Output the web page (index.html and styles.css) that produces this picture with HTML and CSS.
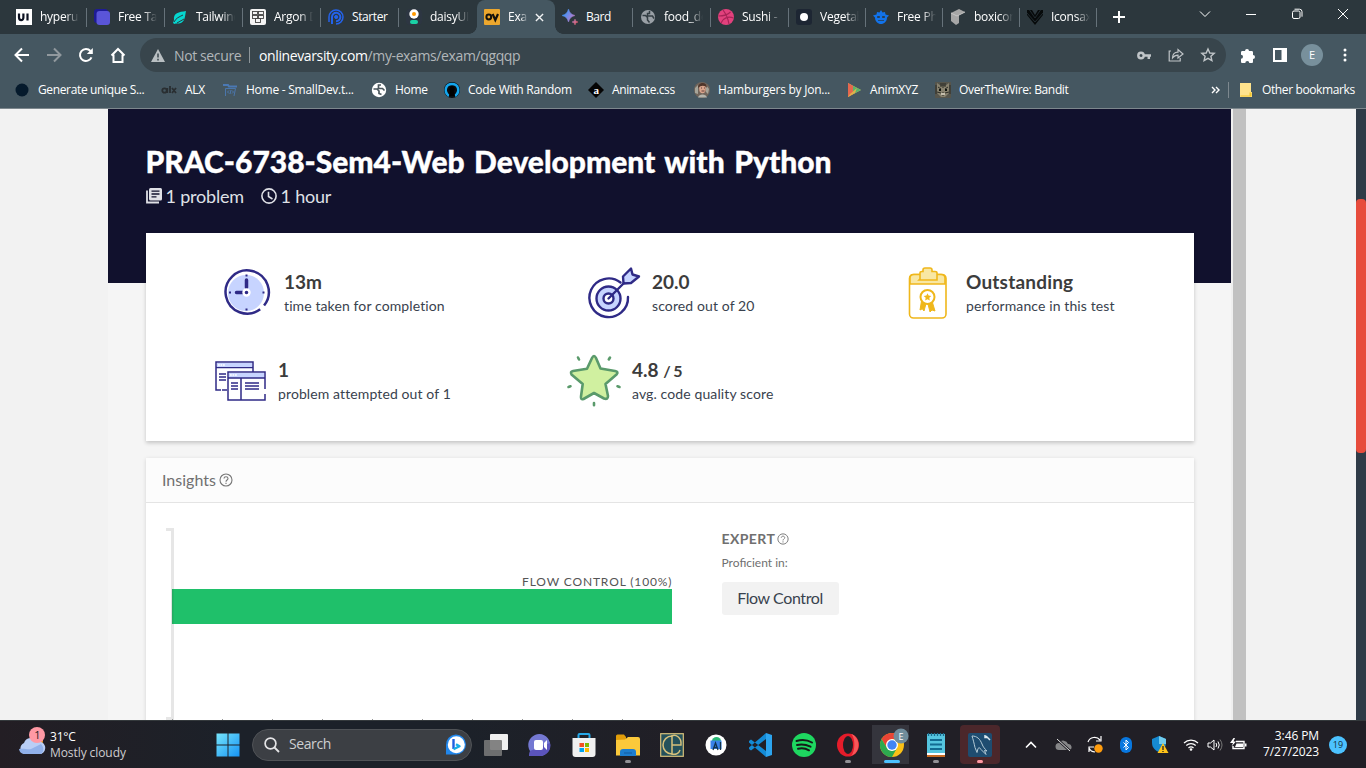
FILE: index.html
```html
<!DOCTYPE html>
<html lang="en">
<head>
<meta charset="utf-8">
<title>Exam result</title>
<link rel="stylesheet" href="styles.css">
</head>
<body>
<header class="browser">
  <div class="tabs">
    <div class="tab"><svg class="fav" viewBox="0 0 16 16"><rect width="16" height="16" fill="#fff"/><path d="M3 4.500v4c0 3.400 4.400 3.400 4.400 0v-4M11.500 4.500v7" fill="none" stroke="#0c1222" stroke-width="2.200"/></svg><span class="tt">hyperui</span></div>
    <div class="tab"><svg class="fav" viewBox="0 0 16 16"><rect width="14" height="14" rx="3" fill="#1e1b96"/><rect x="2.500" y="2" width="13.500" height="14" rx="3" fill="#5a55d8"/></svg><span class="tt">Free Tail</span></div>
    <div class="tab"><svg class="fav" viewBox="0 0 16 16"><path d="M14 2C7 3 1 4 2 11l-1 3 1.500 1C4 14 6 15 9 14c4-2 4-7 5-12z" fill="#06d6d0"/><path d="M2 13c2-4 5-5 9-7M5 14l7-4" stroke="#2c3a40" fill="none"/></svg><span class="tt">Tailwind</span></div>
    <div class="tab"><svg class="fav" viewBox="0 0 16 16"><rect width="16" height="16" rx="2" fill="#f4f4f4"/><g fill="none" stroke="#444" stroke-width=".9"><rect x="2.500" y="2.500" width="5" height="3"/><rect x="8.500" y="2.500" width="5" height="3"/><rect x="2.500" y="6.500" width="5" height="3"/><rect x="8.500" y="6.500" width="5" height="3"/><rect x="5.500" y="9.500" width="5" height="4"/></g></svg><span class="tt">Argon D</span></div>
    <div class="tab"><svg class="fav" viewBox="0 0 16 16" fill="none" stroke="#2463eb"><path d="M1 13V8a7 7 0 1 1 7 7" stroke-width="1.500"/><path d="M4 15V8a4.200 4.200 0 1 1 4 4.200" stroke-width="2"/><circle cx="8.200" cy="8" r="1.600" fill="#2463eb"/></svg><span class="tt nofade">Starter</span></div>
    <div class="tab last"><svg class="fav" viewBox="0 0 16 16"><rect width="16" height="16" rx="4" fill="#2d3642"/><circle cx="8" cy="5" r="4.700" fill="#fff"/><circle cx="8" cy="5" r="2" fill="#ff9900"/><rect x="4" y="11" width="8" height="4" rx="2" fill="#1ad1a5"/></svg><span class="tt">daisyUI</span></div>
    <div class="tab active"><svg class="fav" viewBox="0 0 16 16"><rect width="16" height="16" rx="1" fill="#eda72d"/><circle cx="4.800" cy="8" r="2.400" fill="none" stroke="#15120c" stroke-width="2"/><path d="M8.600 5l2.700 6 2.700-6" fill="none" stroke="#15120c" stroke-width="2.200"/></svg><span class="tt">Exa</span><svg class="close" viewBox="0 0 10 10"><path d="M1 1l8 8M9 1L1 9" stroke="#f1f3f4" stroke-width="1.500"/></svg></div>
    <div class="tab"><svg class="fav" viewBox="0 0 16 16"><defs><linearGradient id="bard" gradientUnits="userSpaceOnUse" x1="1" y1="6" x2="15" y2="14"><stop stop-color="#3f93f5"/><stop offset=".5" stop-color="#9a82d8"/><stop offset="1" stop-color="#e0606e"/></linearGradient></defs><path d="M6.500 0c1.300 4 2.500 5.200 6.500 6.500-4 1.300-5.200 2.500-6.500 6.500C5.200 9 4 7.800 0 6.500 4 5.200 5.200 4 6.500 0zM13 10c.6 2 1 2.400 3 3-2 .6-2.400 1-3 3-.6-2-1-2.400-3-3 2-.6 2.400-1 3-3z" fill="url(#bard)" stroke="url(#bard)" stroke-width=".5"/></svg><span class="tt nofade">Bard</span></div>
    <div class="tab"><svg class="fav" viewBox="0 0 16 16"><circle cx="8" cy="8" r="7" fill="#9aa0a6"/><path d="M2.500 6.500h3l2 2v2.500l2 2.500M9.500 2v2.500H7.500V7h5l1.500 2.500" fill="none" stroke="#333d43" stroke-width="1.500"/></svg><span class="tt">food_de</span></div>
    <div class="tab"><svg class="fav" viewBox="0 0 16 16"><circle cx="8" cy="8" r="8" fill="#e2417d"/><path d="M5 1c3 4 5 8 6 14M.5 7c6 0 9-1 12-4M3 14c2-5 7-7 12.500-5" fill="none" stroke="#a82357" stroke-width="1.200"/></svg><span class="tt">Sushi - F</span></div>
    <div class="tab narrow"><svg class="fav" viewBox="0 0 16 16"><rect width="16" height="16" rx="3" fill="#1d2633"/><circle cx="8" cy="8" r="4" fill="#fff"/></svg><span class="tt">Vegetab</span></div>
    <div class="tab narrow"><svg class="fav" viewBox="0 0 16 16"><path d="M8 1l1.500 2.500L12 3l.5 2.500 3.500 1-2 2c0 4-3 6.500-6 6.500s-6-2.500-6-6.500l-2-2 3.500-1L4 3l2.500.5z" fill="#1273eb"/><path d="M4.500 7.500h2v1h-2zM9.500 7.500h2v1h-2zM5 11.500h6" fill="#2c373d" stroke="#2c373d" stroke-width=".7"/></svg><span class="tt">Free Pho</span></div>
    <div class="tab narrow"><svg class="fav" viewBox="0 0 16 16"><path d="M1 4l8-4 6 3-6 3v8l-3 2-5-4z" fill="#a6a6a6"/><path d="M1 4l6 3 8-4" stroke="#c5c5c5" fill="none"/></svg><span class="tt">boxicons</span></div>
    <div class="tab narrow"><svg class="fav" viewBox="0 0 16 16"><path d="M0 1h5l3 5 3-5h5v5L8 16 0 6z" fill="#070a0b"/><path d="M0 4l8 9 8-9M2.500 1L8 9l5.500-8" stroke="#27343a" stroke-width=".8" fill="none"/></svg><span class="tt">Iconsax</span></div>
    <svg class="plus" viewBox="0 0 12 12"><path d="M6 0v12M0 6h12" stroke="#fff" stroke-width="2"/></svg>
    <div class="winctl">
      <svg width="12" height="12" viewBox="0 0 12 12"><path d="M1 3.500l5 5 5-5"/></svg>
      <svg width="12" height="12" viewBox="0 0 12 12"><path d="M1 6.500h10"/></svg>
      <svg width="12" height="12" viewBox="0 0 12 12"><rect x="1.500" y="3" width="7.500" height="7.500" rx="1.500"/><path d="M3.500 1.200h5a2.500 2.500 0 0 1 2.500 2.500v5"/></svg>
      <svg width="12" height="12" viewBox="0 0 12 12"><path d="M1 1l10 10M11 1L1 11"/></svg>
    </div>
  </div>
  <div class="toolbar">
    <svg class="nav" viewBox="0 0 16 16"><path d="M15 8H2M8 1.500L1.500 8 8 14.500"/></svg>
    <svg class="nav dim" viewBox="0 0 16 16"><path d="M1 8h13M8 1.500L14.500 8 8 14.500"/></svg>
    <svg class="nav" viewBox="0 0 16 16"><path d="M13.500 10.300A6 6 0 1 1 12.500 4"/><path d="M14.800 1v6H8.800z" fill="#fff" stroke="none"/></svg>
    <svg class="nav" viewBox="0 0 16 16"><path d="M1.500 8.500L8 2l6.500 6.500M3.500 7.500V15h9V7.500"/></svg>
    <div class="omni">
      <svg class="warn" viewBox="0 0 14 13"><path d="M7 0l7 13H0z" fill="#b9bfc2"/><path d="M7 4.500v4M7 9.800v1.700" stroke="#38454c" stroke-width="1.500"/></svg>
      <span class="ns">Not secure</span><i class="bar"></i>
      <span class="url"><b>onlinevarsity.com</b>/my-exams/exam/qgqqp</span>
      <svg class="key" viewBox="0 0 14 9"><circle cx="4" cy="4.500" r="2.700" fill="none" stroke="#c0c5c8" stroke-width="2.400"/><path d="M7 4.500h7M11.800 4v4" stroke="#c0c5c8" stroke-width="2.500"/></svg>
      <svg class="share" viewBox="0 0 16 14"><path d="M3 3H1.200v10h11v-3M4.500 10c0-4 2-5.800 5.500-5.800V1.500L15 6l-5 4V7.200c-2.500 0-4 .8-5.500 2.800z"/></svg>
      <svg class="star" viewBox="0 0 14 14"><path d="M7 1l1.800 4 4.400.4-3.300 2.900 1 4.300L7 10.300l-3.900 2.300 1-4.300L.8 5.400 5.200 5z"/></svg>
    </div>
    <svg class="ext" viewBox="0 0 15 15"><path d="M1 4.500c0-1 .5-1.500 1.500-1.500H5a2 2 0 0 1 4 0h2.500c1 0 1.500.5 1.500 1.500V7a2 2 0 0 1 0 4v2.500c0 1-.5 1.500-1.500 1.500H9.300a2 2 0 0 0-4 0H2.500C1.500 15 1 14.500 1 13.500v-2.700a2 2 0 0 0 0-4z" fill="#fff"/></svg>
    <svg class="panel" viewBox="0 0 14 14"><rect x="1" y="1" width="12" height="12" fill="none" stroke="#fff" stroke-width="2"/><path d="M8.500 1h5v12h-5z" fill="#fff"/></svg>
    <span class="avatar">E</span>
    <svg class="dots" viewBox="0 0 4 14"><circle cx="2" cy="2" r="1.500"/><circle cx="2" cy="7" r="1.500"/><circle cx="2" cy="12" r="1.500"/></svg>
  </div>
  <div class="bookmarks">
    <div class="bm b1"><svg viewBox="0 0 16 16"><circle cx="8" cy="8" r="6.500" fill="#051a2c"/></svg><span>Generate unique S...</span></div>
    <div class="bm b2"><svg viewBox="0 0 16 16" fill="none" stroke="#292e31" stroke-width="1.800"><circle cx="3.500" cy="8.500" r="2.200"/><path d="M6.300 6v5M9 4v7M11 6l4 5M15 6l-4 5"/></svg><span>ALX</span></div>
    <div class="bm b3"><svg viewBox="0 0 16 16" fill="none" stroke="#4b79b4"><path d="M1 3h5l1 1.500h8" stroke-width="2"/><path d="M3.500 14V6.500h10L12 14M7 8.500L5.500 10 7 11.500M10 8.500l1.500 1.500-1.500 1.500M9 8l-1 4" stroke-width=".9"/></svg><span>Home - SmallDev.t...</span></div>
    <div class="bm b4"><svg viewBox="0 0 16 16"><circle cx="8" cy="8" r="7.200" fill="#fff"/><path d="M2.500 7h3.500l2 2v2.500l2.500 1M10 3H7.500v3.500h4l2 2" fill="none" stroke="#4a565c" stroke-width="1.700"/></svg><span>Home</span></div>
    <div class="bm b5"><svg viewBox="0 0 16 16"><circle cx="8" cy="8" r="8" fill="#090c0e"/><path d="M5 14C-1 9 2 2 8 2s9 7 3 12" fill="none" stroke="#14a5ec" stroke-width="2.500"/><path d="M8 4a3 3 0 0 0-2 5l-1 5h6l-1-5a3 3 0 0 0-2-5z" fill="#000"/></svg><span>Code With Random</span></div>
    <div class="bm b6"><svg viewBox="0 0 16 16"><path d="M8 0l8 8-8 8-8-8z" fill="#050505"/><text x="8" y="11.500" text-anchor="middle" fill="#fff" class="anim">a</text></svg><span>Animate.css</span></div>
    <div class="bm b7"><svg viewBox="0 0 16 16"><circle cx="8" cy="8" r="8" fill="#70645a"/><path d="M1 6l3-3v9l-3-1zM12 3l3 4-1 5-2-2z" fill="#a6a59a"/><ellipse cx="8.500" cy="6.500" rx="3.300" ry="4.800" fill="#d9a58c"/><path d="M4 6c0-6 9-7 9 0-2-3-6-3-9 0z" fill="#4f352a"/><path d="M4 15.500c1-4 8-4 9 0z" fill="#b4b5ad"/><path d="M7 6h1M10 6h1M7.500 9h3" stroke="#643f38"/></svg><span>Hamburgers by Jon...</span></div>
    <div class="bm b8"><svg viewBox="0 0 16 16"><path d="M2 1l13 7L2 15z" fill="#d9b05a"/><path d="M2 1l5 3v8l-5 3z" fill="#e5674e"/><path d="M7 4l8 4-8 4z" fill="#59b66b"/><path d="M4 12l7-6-2 5-7 4z" fill="#e0b04a"/></svg><span>AnimXYZ</span></div>
    <div class="bm b9"><svg viewBox="0 0 16 16"><rect width="16" height="16" fill="#56554c"/><path d="M2 1l4 3h4l4-3v10l-4 4H6l-4-4z" fill="#88826f"/><path d="M3 5l3 2M13 5l-3 2M6 1v4M10 1v4M8 1v5M2 10l4 1M14 10l-4 1M8 10v4M1 3v9M15 3v9" stroke="#2c2c25"/><path d="M4 8h2M10 8h2" stroke="#11140e" stroke-width="2"/><path d="M6 12h4" stroke="#c5bfae" stroke-width="2"/></svg><span>OverTheWire: Bandit</span></div>
    <svg class="more" viewBox="0 0 9 8"><path d="M1 1l3 3-3 3M5 1l3 3-3 3" fill="none" stroke="#fff" stroke-width="1.400"/></svg>
    <i class="bmsep"></i>
    <div class="bm other"><svg viewBox="0 0 16 16"><path d="M2 1h11v9h1v5H2z" fill="#ffe38d"/><path d="M2.500 14.500h11v-4h-2v3h-9z" fill="#f3c62d"/></svg><span>Other bookmarks</span></div>
  </div>
</header>

<main class="page">
  <section class="content">
    <div class="hero">
      <h1>PRAC-6738-Sem4-Web Development with Python</h1>
      <div class="meta">
        <svg viewBox="0 0 16 16" class="lib"><path d="M1 2.500v12h12" fill="none" stroke="#dfe0e6" stroke-width="1.800"/><rect x="3" y="0" width="13" height="12.500" rx="1.500" fill="#dfe0e6"/><path d="M5.500 3.200h8M5.500 6h8M5.500 8.800h5" stroke="#11112d" stroke-width="1.300"/></svg><span class="m1">1 problem</span>
        <svg viewBox="0 0 16 16" class="clk"><circle cx="8" cy="8" r="7.100"/><path d="M7.500 3.800V8.500l4 2.500"/></svg><span>1 hour</span>
      </div>
    </div>
    <div class="summary">
      <div class="stat s1">
        <svg width="46" height="46" viewBox="0 0 46 46"><circle cx="23" cy="23" r="18" fill="#c7d4ff"/><path d="M41.700 34.500A21.600 21.600 0 1 0 38 38.500" transform="rotate(3 23 23)" fill="none" stroke="#2f2a86" stroke-width="2.500"/><path d="M23.500 10v7.500M13.500 22.500h6" stroke="#2f2a86" stroke-width="3.500" stroke-linecap="round"/><path d="M23.500 4.500v2M23.500 38.500v2M6 22.500h2M39.500 22.500h2" stroke="#2f2a86" stroke-width="2"/><circle cx="23.500" cy="22.500" r="3" fill="#2f2a86" stroke="#fff" stroke-width="2.400"/></svg>
        <div><strong>13m</strong><p>time taken for completion</p></div>
      </div>
      <div class="stat s2">
        <svg width="52" height="52" viewBox="0 0 52 52" fill="none" stroke="#2f2a86" stroke-width="2.400" stroke-linejoin="round"><path d="M32.500 15.500A19.300 19.300 0 1 0 40 30" stroke-linecap="round"/><circle cx="20.500" cy="31.500" r="12" fill="#c7d4ff"/><circle cx="20.500" cy="31.500" r="5" fill="#fff"/><path d="M35.500 16.500l-.5-7L43 1.500l1.500 6L51 9.500l-8 6.500z" fill="#c7d4ff"/><path d="M20.500 31.500L36 16" stroke-linecap="round"/></svg>
        <div><strong>20.0</strong><p>scored out of 20</p></div>
      </div>
      <div class="stat s3">
        <svg width="40" height="52" viewBox="0 0 40 52" fill="none" stroke="#efb71b" stroke-width="1.600"><rect x="1.500" y="7.500" width="36.500" height="43.500" rx="4" fill="#fff"/><path d="M2 17v-6q0-3.500 4-3.500h27q4 0 4 3.500v6z" fill="#f8e7a3"/><path d="M12 12V6q0-1.500 2-1.500h1V3q0-2 2-2h5q2 0 2 2v1.500h3q2 0 2 1.500v7H11z" fill="#f8e7a3"/><path d="M13.500 34L12 43l2.300-1.200L16 44l2-7.500M24 34l3 10-3-1-2 2-2-8" fill="#efb71b" stroke-width="1"/><circle cx="19.500" cy="30" r="7" fill="#fff" stroke-width="2"/><path d="M19.500 26.200l1.100 2.400 2.700.3-2 1.900.5 2.700-2.300-1.300-2.400 1.300.6-2.700-2-1.900 2.700-.3z" fill="#efb71b" stroke="none"/></svg>
        <div><strong class="wide">Outstanding</strong><p>performance in this test</p></div>
      </div>
      <div class="stat s4">
        <svg width="51" height="40" viewBox="0 0 51 40" fill="none" stroke="#2f2a86" stroke-width="1.500"><path d="M6 29H1V1h37v10M1 6.500h37M7 29h5M4 13h7M4 16h7M4 19h7"/><path d="M2 2h35v4H2z" fill="#c7d4ff" stroke="none"/><path d="M50 28V11H13v28h37v-6" fill="#fff"/><path d="M14 12h35v5H14z" fill="#c7d4ff" stroke="none"/><path d="M13 17h37M26 17v22M16 22h7M16 25h7M16 28h7M30 22h14M30 25h14M30 28h14"/><path d="M3 4h7M15 14h7" stroke="#fff" stroke-width="1.600" stroke-dasharray="1.800 .7"/></svg>
        <div><strong>1</strong><p>problem attempted out of 1</p></div>
      </div>
      <div class="stat s5">
        <svg width="54" height="54" viewBox="0 0 54 54" fill="none" stroke="#5a9a6b" stroke-width="2.600" stroke-linecap="round" stroke-linejoin="round"><path d="M25 4q2-4 4 0l4.500 10.500L48 17q4 1 1.500 3.500L38.500 30 41 42q0 4-4 2.500L27 39l-10.500 6q-3 1-2.500-2.500L15.700 30 4.500 20.500Q3 17.500 6 17l14-2.300z" fill="#d0f0a0"/><path d="M11 3.500l1 2M43 3.500l-1.200 2M1.500 33l2-.7M50.500 32.300l2 .7M27 49v2.200"/></svg>
        <div><strong>4.8 <small>/ 5</small></strong><p>avg. code quality score</p></div>
      </div>
    </div>
    <div class="insights">
      <div class="ihead"><span>Insights</span><svg class="q" viewBox="0 0 14 14"><circle cx="7" cy="7" r="6"/><path d="M5 5.500c0-2.400 4-2.400 4 0C9 7 7 7 7 8.700M7 9.700v1.400"/></svg></div>
      <div class="ibody">
        <svg class="chart" viewBox="0 0 520 192"><path d="M0 1.500h6.500V190.500H0" fill="none" stroke="#e6e6e6" stroke-width="3"/><rect x="6" y="61" width="500" height="35" fill="#1fc06a"/><path d="M6.700 61v35" stroke="#25ab61" stroke-width="1.500"/><text x="505.500" y="58" text-anchor="end" textLength="149.500" class="clabel">FLOW CONTROL (100%)</text><path d="M6.500 191v1M56.500 191v1M106.500 191v1M156.500 191v1M206.500 191v1M256.500 191v1M306.500 191v1M356.500 191v1M406.500 191v1M456.500 191v1M506.500 191v1" stroke="#999"/></svg>
        <div class="skills">
          <h2>EXPERT<svg class="q small" viewBox="0 0 14 14"><circle cx="7" cy="7" r="6"/><path d="M5 5.500c0-2.400 4-2.400 4 0C9 7 7 7 7 8.700M7 9.700v1.400"/></svg></h2>
          <p>Proficient in:</p>
          <span class="chip">Flow Control</span>
        </div>
      </div>
    </div>
  </section>
  <div class="inner-scroll"></div>
  <div class="gutter"></div>
  <div class="outer-scroll"><i></i></div>
</main>

<footer class="taskbar">
  <div class="weather">
    <svg width="30" height="32" viewBox="0 0 30 32"><circle cx="20" cy="15" r="5" fill="#f0a02a"/><path d="M6 28a6 6 0 0 1 0-11 7 7 0 0 1 13-1 5.500 5.500 0 0 1 4 12z" fill="#b9cef6"/><path d="M6 28a6 6 0 0 1-5-5c5-1 9 1 12 0l10-5c3 3 3 8 0 10z" fill="#91b1ea"/><circle cx="19" cy="9" r="8" fill="#ff99a4"/><text x="19.500" y="13" text-anchor="middle" class="wnum">1</text></svg>
    <div class="wtext"><span>31°C</span><span class="soft">Mostly cloudy</span></div>
  </div>
  <div class="cell"><svg width="24" height="24" viewBox="0 0 24 24"><defs><linearGradient id="win" gradientUnits="userSpaceOnUse" x2="24" y2="24"><stop stop-color="#78e6fb"/><stop offset="1" stop-color="#1492f4"/></linearGradient></defs><path d="M.5.500h11v11H.5zM12.500.500h11v11h-11zM.5 12.500h11v11H.5zM12.500 12.500h11v11h-11z" fill="url(#win)"/></svg></div>
  <div class="search"><svg width="16" height="16" viewBox="0 0 16 16"><circle cx="6.500" cy="6.500" r="5.400" fill="none" stroke="#e4e4e6" stroke-width="1.700"/><path d="M10.500 10.500L15 15" stroke="#e4e4e6" stroke-width="1.800"/></svg><span>Search</span><svg class="bing" width="20" height="20" viewBox="0 0 20 20"><path d="M0 19.500V10a10 10 0 1 1 10 9.500z" fill="#2187ec"/><circle cx="10.300" cy="9.800" r="8.500" fill="#fff"/><path d="M7.500 4v10" fill="none" stroke="#1f5fe0" stroke-width="2.400"/><path d="M7.500 14.200l6-3-3.500-2" fill="none" stroke="#18aee5" stroke-width="2.400" stroke-linejoin="round"/></svg></div>
  <div class="apps">
    <div class="cell"><svg width="24" height="24" viewBox="0 0 24 24"><rect x="6" y="1" width="18" height="16" rx="1" fill="#efefef"/><rect y="7" width="18" height="16" rx="1" fill="#777" opacity=".9"/></svg></div>
    <div class="cell"><svg width="24" height="24" viewBox="0 0 24 24"><path d="M1 23l1-5A11 11 0 1 1 12 23z" fill="#7478d2"/><path d="M1 23l1-5 20-8c2 7-4 13-10 13z" fill="#5b54bc"/><rect x="6" y="7" width="9" height="10" rx="2" fill="#fff"/><path d="M16 10l3-3v10l-3-3z" fill="#fff"/></svg></div>
    <div class="cell"><svg width="24" height="24" viewBox="0 0 24 24"><path d="M6.500 7V2q0-1 1-1h9q1 0 1 1v5" fill="none" stroke="#26a8e8" stroke-width="2"/><path d="M.5 5h23v16q0 3-3 3h-17q-3 0-3-3z" fill="#f0f0f0"/><path d="M7.500 10H12v4H7.500z" fill="#f25022"/><path d="M13 10h4v4h-4z" fill="#7fba00"/><path d="M7.500 15H12v4H7.500z" fill="#00a4ef"/><path d="M13 15h4v4h-4z" fill="#ffb900"/></svg></div>
    <div class="cell run"><svg width="24" height="24" viewBox="0 0 24 24"><path d="M0 3q0-1.500 1.500-1.500H8L10 4v4H0z" fill="#e19d09"/><path d="M0 7l9-.5L12 4h10q2 0 2 2v16.500H0z" fill="#fbc93b"/><path d="M4 23v-4q0-3 3-3h10q3 0 3 3v4z" fill="#1c7dcf"/><path d="M8 20h8" stroke="#135b9f"/></svg></div>
    <div class="cell"><svg width="24" height="24" viewBox="0 0 24 24" fill="none" stroke="#d6c07b" stroke-width="1.500"><rect x=".7" y=".7" width="22.600" height="22.600" fill="#24515b" stroke-width="1.200"/><path d="M12 3a9 9 0 1 0 0 18M12 2v20M12 12h9c1-8-6-11-9-9M12 21c4 1 7-1 8-4"/></svg></div>
    <div class="cell"><svg width="22" height="22" viewBox="0 0 22 22"><circle cx="11" cy="11" r="10.500" fill="#fff"/><path d="M7 7a4.500 4 0 0 1 9 0z" fill="#28b875"/><rect x="5.500" y="6.500" width="11" height="8.500" fill="#3982e8"/><path d="M8 16l2.500-7 2.500 7M9 13.500h3M15.500 8v8" stroke="#12344d" stroke-width="1.300" fill="none"/></svg></div>
    <div class="cell"><svg width="24" height="24" viewBox="0 0 24 24"><path d="M1 8l2-1.500L18 18v6L1 9.500zM1 16l2 1.500L18 6V0L1 14.500z" fill="#138ad5"/><path d="M18 0l6 2v20l-6 2z" fill="#2ca4ef"/></svg></div>
    <div class="cell"><svg width="24" height="24" viewBox="0 0 24 24"><circle cx="12" cy="12" r="12" fill="#1ed760"/><path d="M4.500 8c5-1.500 11-1 15.500 1.500M5 12c5-1.200 9-.5 13.500 1.700M6 15.800c4-1 7.500-.5 11 1.500" fill="none" stroke="#151b18" stroke-width="2" stroke-linecap="round"/></svg></div>
    <div class="cell run"><svg width="24" height="24" viewBox="0 0 24 24"><ellipse cx="12" cy="12" rx="11" ry="11.500" fill="#e51c2a"/><path d="M15 1c9 2 11 18 0 22 4-3 5-18 0-22z" fill="#f6585a"/><ellipse cx="12" cy="12" rx="5" ry="9" fill="#211f26"/></svg></div>
    <div class="cell chrome"><svg width="30" height="28" viewBox="0 0 30 28"><circle cx="12" cy="16" r="12" fill="#fbc116"/><path d="M1.600 10A12 12 0 0 1 22.400 10H12l-5 9z" fill="#e94435"/><path d="M1.600 10a12 12 0 0 0 10.400 18l5-9-5 3-5-3z" fill="#2da94f"/><circle cx="12" cy="16" r="6" fill="#fff"/><circle cx="12" cy="16" r="4.700" fill="#4285f4"/><circle cx="21" cy="7" r="7.500" fill="#708d9c"/><text x="21" y="10.500" text-anchor="middle" class="cnum">E</text></svg></div>
    <div class="cell run"><svg width="20" height="24" viewBox="0 0 20 24"><rect x="1" y="1" width="18" height="20" fill="#55c5df"/><path d="M2.500 0v3M5.500 0v3M8.500 0v3M11.500 0v3M14.500 0v3M17.500 0v3" stroke="#196e91" stroke-width="1.300"/><path d="M4 7h12M4 11.500h12M4 16h12" stroke="#126a91" stroke-width="1.800"/><path d="M1 20h18v2H1z" fill="#fff"/><path d="M1 22h18v2H1z" fill="#c66a22"/></svg></div>
    <div class="cell mysql"><svg width="24" height="24" viewBox="0 0 24 24"><rect width="24" height="24" rx="2" fill="#1e4c70"/><path d="M4 3c5 0 8 3 10 8 1 3 3 5 5 7l-2.500-.5 1.500 4-5-5c-1-2-2-2-3-1l-1 4-2-5C6 10 5 6 4 3z" fill="none" stroke="#b4cad6" stroke-width="1"/><path d="M18 3l4 4M17 2v2.500h2.500" fill="none" stroke="#dce8ee" stroke-width="1.500"/></svg></div>
  </div>
  <div class="tray">
    <svg class="t1" width="12" height="8" viewBox="0 0 12 8"><path d="M1 6.500l5-5 5 5" fill="none" stroke="#fff" stroke-width="1.600"/></svg>
    <svg class="t2" width="17" height="14" viewBox="0 0 17 14"><path d="M4 12a3.500 3.500 0 0 1 0-7 5 5 0 0 1 9 1 3 3 0 0 1 1 6z" fill="#858587"/><path d="M2 1l13 12" stroke="#211f26" stroke-width="2.500"/><path d="M2 1l13 12" stroke="#e2e2e2"/></svg>
    <svg class="t3" width="18" height="17" viewBox="0 0 18 17"><path d="M2 6a7 7 0 0 1 12-2M15 0v5h-5M3 16v-5h5M3 12a7 7 0 0 0 6 4" fill="none" stroke="#fff" stroke-width="1.200"/><circle cx="12.500" cy="12.500" r="4.200" fill="#ff9c0d"/></svg>
    <svg class="t4" width="12" height="16" viewBox="0 0 12 16"><rect width="12" height="16" rx="6" fill="#0877df"/><path d="M3.500 5.500l5 5L6 13V3l2.500 2.500-5 5" fill="none" stroke="#fff"/></svg>
    <svg class="t5" width="17" height="17" viewBox="0 0 17 17"><path d="M7 0l7 3v4c0 5-4 8-7 9C4 15 0 12 0 7V3z" fill="#168ad1"/><path d="M7 0l7 3v5H7z" fill="#70cbed"/><path d="M11 7l5.500 10h-11z" fill="#ffc319"/><path d="M11 10v4M11 15v1" stroke="#222" stroke-width="1.300"/></svg>
    <svg class="t6" width="16" height="13" viewBox="0 0 16 13"><path d="M1 5a10 10 0 0 1 14 0M3.300 7.500a6.800 6.800 0 0 1 9.400 0M5.500 10a3.500 3.500 0 0 1 5 0" fill="none" stroke="#fff" stroke-width="1.200"/><circle cx="8" cy="11.500" r="1.300" fill="#fff"/></svg>
    <svg class="t7" width="16" height="14" viewBox="0 0 16 14" fill="none" stroke="#fff"><path d="M1 5v4h2.500L7 12V2L3.500 5zM9 5q1.500 2 0 4M11 3.500q2.500 3.500 0 7"/><path d="M13 1.500q4 5.500 0 11" stroke="#777"/></svg>
    <svg class="t8" width="17" height="13" viewBox="0 0 17 13"><path d="M6 3.500h8v7H3V8" fill="none" stroke="#fff" stroke-width="1.400"/><path d="M6.500 5.500H13v3.500H5zM15 5.500h1.500v3H15zM3.500 0L0 5h3L1.500 8.500 6 3.500H3.500L5 0z" fill="#fff"/></svg>
    <div class="clock"><span>3:46 PM</span><span>7/27/2023</span></div>
    <span class="notif">19</span>
  </div>
</footer>
</body>
</html>
```
FILE: styles.css
```css
* { box-sizing: border-box; }
body { margin: 0; width: 1366px; height: 768px; overflow: hidden; display: flex; flex-direction: column; font-family: "Open Sans", "Noto Sans", sans-serif; font-size: 12px; }
svg { display: block; flex: none; overflow: visible; }
h1, h2, p { margin: 0; }

/* Browser frame */
.browser { height: 109px; flex: none; background: #455761; border-bottom: 1px solid #7d878d; color: #fff; }
.tabs { height: 34px; display: flex; padding-left: 9px; background: #2c373d; }
.tab { width: 78px; height: 34px; padding-left: 7px; display: flex; align-items: center; background: linear-gradient(#66727a, #66727a) right 0 top 8px / 1px 19px no-repeat; }
.tab.narrow { width: 77px; }
.tab.last { background: none; }
.tab.active { background: #455761; border-radius: 8px 8px 0 0; position: relative; }
.tab.active::before, .tab.active::after { content: ""; position: absolute; bottom: 0; width: 8px; height: 8px; }
.tab.active::before { left: -8px; background: radial-gradient(circle at 0 0, transparent 7.500px, #455761 8px); }
.tab.active::after { right: -8px; background: radial-gradient(circle at 100% 0, transparent 7.500px, #455761 8px); }
.fav { width: 16px; height: 16px; }
.tt { margin-left: 8px; width: 39px; overflow: hidden; white-space: nowrap; line-height: 18px; letter-spacing: -.25px; -webkit-mask-image: linear-gradient(90deg, #000 65%, transparent); mask-image: linear-gradient(90deg, #000 65%, transparent); }
.tt.nofade { -webkit-mask-image: none; mask-image: none; letter-spacing: -.4px; }
.active .tt { width: 20px; }
.close { width: 9px; height: 9px; margin-left: 7px; }
.plus { width: 12px; height: 12px; margin: 11px 0 0 16px; }
.winctl { margin-left: 74px; display: flex; gap: 34px; padding-top: 8px; }
.winctl svg { fill: none; stroke: #fff; stroke-width: 1; }
.toolbar { height: 42px; display: flex; align-items: center; padding-left: 14px; }
.nav { width: 16px; height: 16px; margin-right: 16px; fill: none; stroke: #fff; stroke-width: 2; }
.nav.dim { stroke: #91999e; }
.omni { width: 1086px; height: 34px; margin-left: -2px; border-radius: 17px; background: #38454c; display: flex; align-items: center; padding-left: 11px; font-size: 14px; }
.warn { width: 14px; height: 13px; }
.ns { margin-left: 9px; width: 69px; color: #b2b7ba; white-space: nowrap; letter-spacing: -.38px; }
.bar { width: 1px; height: 16px; background: #8d9599; margin: 0 9px 0 6px; }
.url { color: #b2b7ba; letter-spacing: -.38px; width: 878px; }
.url b { font-weight: 400; color: #fff; }
.key { width: 14px; height: 9px; }
.share { width: 16px; height: 14px; margin-left: 17px; fill: none; stroke: #c0c5c8; stroke-width: 1.200; }
.star { width: 14px; height: 14px; margin-left: 17px; fill: none; stroke: #c0c5c8; stroke-width: 1.400; }
.ext { width: 15px; height: 15px; margin-left: 14px; }
.panel { width: 14px; height: 14px; margin-left: 18px; }
.avatar { width: 22px; height: 22px; margin-left: 14px; border-radius: 50%; background: #78909c; text-align: center; font-size: 11px; line-height: 22px; }
.dots { width: 4px; height: 14px; margin-left: 20px; fill: #fff; }
.bookmarks { height: 32px; display: flex; align-items: center; padding: 0 0 4px 14px; }
.bm { display: flex; align-items: center; white-space: nowrap; letter-spacing: -.3px; }
.bm svg { width: 16px; height: 16px; margin-right: 8px; }
.bm span { margin-top: -1px; }
.anim { font: bold 11px "Liberation Serif", serif; }
.b1 { width: 147px; letter-spacing: -.36px; } .b2 { width: 61px; } .b3 { width: 149px; letter-spacing: -.25px; } .b4 { width: 73px; } .b5 { width: 144px; letter-spacing: -.25px; }
.b6 { width: 106px; letter-spacing: -.4px; } .b7 { width: 152px; letter-spacing: -.25px; } .b8 { width: 89px; letter-spacing: -.2px; } .b9 { width: 276px; letter-spacing: -.35px; }
.more { width: 9px; height: 8px; }
.bmsep { width: 1px; height: 16px; margin: 0 9px 0 8px; background: #7d888f; }
.other { letter-spacing: -.38px; }

/* Result page */
.page { height: 611px; flex: none; display: flex; background: #f2f2f2; padding-left: 108px; font-family: Lato, sans-serif; overflow: hidden; }
.content { width: 1123px; background: #f5f5f5; }
.hero { height: 174px; background: #11112d; padding: 34px 37.500px 0; color: #fff; }
h1 { font-size: 30px; line-height: 36px; font-weight: 900; letter-spacing: -.02px; white-space: nowrap; -webkit-text-stroke: .35px #fff; width: 686px; text-align: justify; text-align-last: justify; }
.meta { display: flex; align-items: center; height: 24px; margin-top: 5px; font-size: 18px; color: #dfe0e6; letter-spacing: -.2px; }
.meta svg { width: 16px; height: 16px; margin-right: 5px; }
.meta span { margin-left: -1px; }
.lib { height: 15px; }
.meta .m1 { width: 95px; white-space: nowrap; }
.clk { fill: none; stroke: #dfe0e6; stroke-width: 1.600; }
.summary { position: relative; width: 1048px; height: 208px; margin: -50px 0 0 38px; background: #fff; box-shadow: 0 2px 4px rgba(0,0,0,.2); padding-top: 16px; display: grid; grid-template-columns: 349px 350px 349px; grid-template-rows: 88px 88px; }
.stat { display: flex; align-items: center; color: #39424e; white-space: nowrap; }
.stat strong { display: block; font-size: 19px; line-height: 24px; height: 24px; font-weight: 700; color: #3c3c3c; }
.stat strong.wide { letter-spacing: .2px; }
.stat small { font-size: 16px; letter-spacing: -.6px; }
.stat p { font-size: 14px; line-height: 18px; margin-top: 3px; letter-spacing: .11px; }
.stat > div { margin-top: -1px; }
.s1 { padding-left: 77px; gap: 15px; } .s2 { padding-left: 93px; gap: 12px; } .s3 { padding-left: 62.500px; gap: 18.500px; }
.s4 { padding-left: 69px; gap: 12px; } .s5 { padding-left: 72px; gap: 11px; }
.insights { width: 1048px; height: 300px; margin: 17px 0 0 38px; background: #fff; box-shadow: 0 1px 4px rgba(0,0,0,.14); }
.ihead { height: 45px; display: flex; align-items: center; padding-left: 16px; border-bottom: 1px solid #e4e4e4; background: #fcfcfc; font-size: 16px; color: #707070; }
.ihead span { margin-top: -2px; }
.q { width: 14px; height: 14px; margin-left: 3px; fill: none; stroke: #777; stroke-width: 1.100; }
.ibody { display: flex; padding: 25px 0 0 20px; }
.chart { width: 520px; height: 192px; }
.clabel { font-size: 12px; fill: #555; }
.skills { margin-left: 35.500px; color: #707070; }
h2 { display: flex; align-items: center; margin-top: 1px; font-size: 14px; line-height: 20px; letter-spacing: .4px; }
.q.small { width: 12px; height: 12px; margin-left: 2px; }
.skills p { margin-top: 6px; font-size: 12px; line-height: 16px; }
.chip { display: block; width: 117px; height: 33px; margin-top: 11px; border-radius: 3px; background: #f2f2f2; color: #39424e; font-size: 16px; letter-spacing: -.4px; line-height: 31px; text-align: center; }
.inner-scroll { width: 15px; background: #c1c1c1; border-left: 2px solid #efefef; }
.gutter { width: 110px; background: #f2f2f2; }
.outer-scroll { width: 10px; background: #2f3b47; padding-top: 90px; }
.outer-scroll i { display: block; height: 254px; border-radius: 4px; background: #e74c3c; }

/* Desktop taskbar */
.taskbar { height: 48px; display: flex; align-items: center; background: linear-gradient(90deg, #231e24, #1c2129 17%, #1c2129 34%, #211f26 50%, #211f26); border-top: 1px solid #34393c; color: #fff; }
.weather { width: 206px; padding-left: 18px; display: flex; }
.weather svg { margin-top: -3px; }
.wtext { display: flex; flex-direction: column; margin-left: 2px; line-height: 16px; letter-spacing: -.2px; }
.soft { color: #cfcdd0; letter-spacing: -.08px; }
.wnum { font-size: 11px; fill: #241e23; }
.cell { width: 44px; height: 47px; display: flex; align-items: center; justify-content: center; position: relative; flex: none; }
.search { width: 220px; height: 32px; margin-left: 2px; border: 1px solid #505357; border-radius: 16px; background: #3c3f44; display: flex; align-items: center; padding: 0 5px 0 11px; font-size: 14px; color: #cecfd1; letter-spacing: -.4px; }
.search span { margin: -2px 0 0 9px; flex: 1; }
.apps { display: flex; margin-left: 2px; }
.run::after, .mysql::after, .chrome::after { content: ""; position: absolute; bottom: 5px; left: 19px; width: 6px; height: 3px; border-radius: 2px; background: #929196; }
.chrome { background: linear-gradient(#35353d, #35353d) 2px 4px / 37px 39px no-repeat; }
.chrome svg { margin: -3px 0 0 6px; }
.chrome::after { left: 14px; width: 16px; background: #4cc2ff; }
.cnum { font-size: 9px; fill: #fff; }
.mysql::before { content: ""; position: absolute; left: 2px; top: 4px; width: 40px; height: 39px; border-radius: 4px; background: #4b272b; }
.mysql svg { position: relative; }
.mysql::after { background: #ff99a4; }
.tray { display: flex; align-items: center; padding-left: 23px; }
.t2 { margin-left: 18px; } .t3 { margin-left: 14px; } .t4 { margin-left: 16px; } .t5 { margin-left: 20px; } .t6 { margin-left: 14px; } .t7 { margin-left: 8px; } .t8 { margin-left: 7px; }
.clock { display: flex; flex-direction: column; width: 72px; margin-top: -1px; text-align: right; line-height: 16px; letter-spacing: -.1px; }
.notif { width: 18px; height: 18px; margin-left: 10px; border-radius: 50%; background: #4cc2ff; color: #142c3b; font-size: 9px; line-height: 18px; text-align: center; }
```
